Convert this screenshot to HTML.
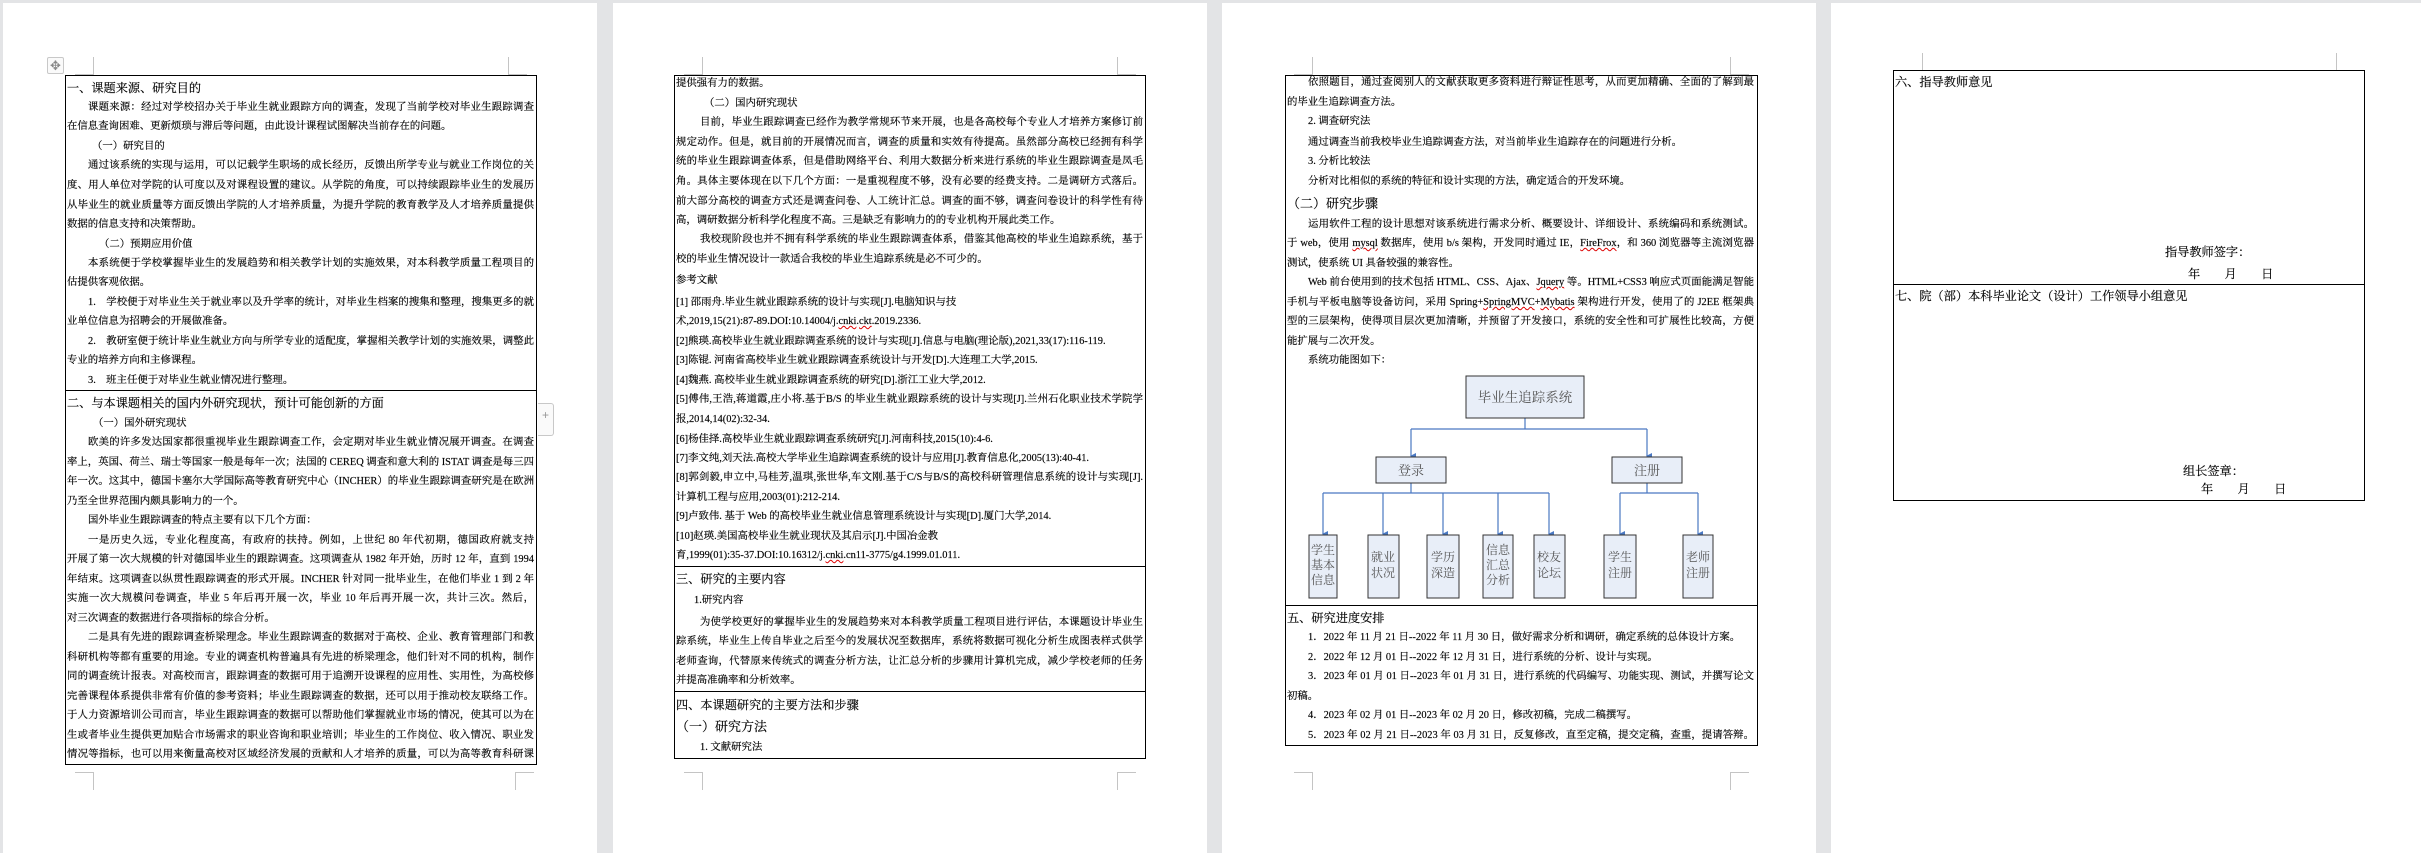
<!DOCTYPE html>
<html><head><meta charset="utf-8">
<style>
*{box-sizing:border-box;margin:0;padding:0}
body{width:2421px;height:843px;background:#e3e4e6;position:relative;overflow:hidden;font-family:"Liberation Serif","Noto Serif CJK SC",serif;color:#000}
.pg{position:absolute;top:3px;height:850px;background:#fff}
.tb{position:absolute;border:1.5px solid #000}
.hr{position:absolute;height:0;border-top:1.5px solid #000}
.c{position:absolute;top:0;width:471px;height:843px;-webkit-text-stroke:0.15px #000}
.l{position:absolute;left:2px;width:467px;height:20px;line-height:20px;font-size:10.4px;overflow:hidden;white-space:normal}
.j{text-align:justify;text-align-last:justify}
.i{padding-left:21px}
.h{font-size:12.2px}
.h2{font-size:13px}
.w{text-decoration:underline wavy #d00;text-decoration-thickness:1px}
.cm{position:absolute;border-color:#c4c4c4;border-style:solid;width:19px;height:18px}
.tl{border-width:0 1px 1px 0}
.tr{border-width:0 0 1px 1px}
.bl{border-width:1px 1px 0 0}
.br{border-width:1px 0 0 1px}
</style></head><body>

<div class="pg" style="left:3px;width:594px"></div>
<div class="pg" style="left:613px;width:594px"></div>
<div class="pg" style="left:1222px;width:594px"></div>
<div class="pg" style="left:1831px;width:600px"></div>

<div class="cm tl" style="left:75px;top:57px"></div><div class="cm tr" style="left:508px;top:57px"></div>
<div class="cm bl" style="left:75px;top:772px"></div><div class="cm br" style="left:515px;top:772px"></div>
<div class="cm tl" style="left:684px;top:57px"></div><div class="cm tr" style="left:1117px;top:57px"></div>
<div class="cm bl" style="left:684px;top:772px"></div><div class="cm br" style="left:1117px;top:772px"></div>
<div class="cm tl" style="left:1294px;top:57px"></div><div class="cm tr" style="left:1730px;top:57px"></div>
<div class="cm bl" style="left:1294px;top:772px"></div><div class="cm br" style="left:1730px;top:772px"></div>
<div class="cm tl" style="left:1904px;top:53px"></div><div class="cm tr" style="left:2336px;top:53px"></div>

<div style="position:absolute;left:47px;top:57px;width:17px;height:17px;border:1px solid #c8c8c8;border-radius:2px;background:#fafafa;color:#888;font-size:13px;line-height:15px;text-align:center">✥</div>
<div style="position:absolute;left:538px;top:403px;width:16px;height:33px;border:1px solid #c8c8c8;border-left:none;border-radius:0 3px 3px 0;background:#fafafa;color:#999;font-size:12px;line-height:22px;text-align:center;font-family:'Liberation Sans',sans-serif">+</div>

<!-- PAGE 1 -->
<div class="tb" style="left:65px;top:75px;width:472px;height:690px"></div>
<div class="hr" style="left:65px;top:390px;width:472px"></div>
<div class="c" style="left:65px">
<div class="l h" style="top:77px;height:22px;line-height:22px">一、课题来源、研究目的</div>
<div class="l i j" style="top:98px">课题来源：经过对学校招办关于毕业生就业跟踪方向的调查，发现了当前学校对毕业生跟踪调查存</div>
<div class="l" style="top:117px">在信息查询困难、更新烦琐与滞后等问题，由此设计课程试图解决当前存在的问题。</div>
<div class="l" style="top:137px;padding-left:25px">（一）研究目的</div>
<div class="l i j" style="top:156px">通过该系统的实现与运用，可以记载学生职场的成长经历，反馈出所学专业与就业工作岗位的关联</div>
<div class="l j" style="top:176px">度、用人单位对学院的认可度以及对课程设置的建议。从学院的角度，可以持续跟踪毕业生的发展历程，</div>
<div class="l j" style="top:196px">从毕业生的就业质量等方面反馈出学院的人才培养质量，为提升学院的教育教学及人才培养质量提供大</div>
<div class="l" style="top:215px">数据的信息支持和决策帮助。</div>
<div class="l" style="top:235px;padding-left:32px">（二）预期应用价值</div>
<div class="l i j" style="top:254px">本系统便于学校掌握毕业生的发展趋势和相关教学计划的实施效果，对本科教学质量工程项目的评</div>
<div class="l" style="top:273px">估提供客观依据。</div>
<div class="l i j" style="top:293px">1.　学校便于对毕业生关于就业率以及升学率的统计，对毕业生档案的搜集和整理，搜集更多的就</div>
<div class="l" style="top:312px">业单位信息为招聘会的开展做准备。</div>
<div class="l i j" style="top:332px">2.　教研室便于统计毕业生就业方向与所学专业的适配度，掌握相关教学计划的实施效果，调整此</div>
<div class="l" style="top:351px">专业的培养方向和主修课程。</div>
<div class="l i" style="top:371px">3.　班主任便于对毕业生就业情况进行整理。</div>
<div class="l h" style="top:392px;height:22px;line-height:22px">二、与本课题相关的国内外研究现状，预计可能创新的方面</div>
<div class="l" style="top:414px;padding-left:26px">（一）国外研究现状</div>
<div class="l i j" style="top:433px">欧美的许多发达国家都很重视毕业生跟踪调查工作，会定期对毕业生就业情况展开调查。在调查频</div>
<div class="l j" style="top:453px">率上，英国、荷兰、瑞士等国家一般是每年一次；法国的 CEREQ 调查和意大利的 ISTAT 调查是每三四</div>
<div class="l j" style="top:472px">年一次。这其中，德国卡塞尔大学国际高等教育研究中心（INCHER）的毕业生跟踪调查研究是在欧洲</div>
<div class="l" style="top:492px">乃至全世界范围内颇具影响力的一个。</div>
<div class="l i" style="top:511px">国外毕业生跟踪调查的特点主要有以下几个方面：</div>
<div class="l i j" style="top:531px">一是历史久远，专业化程度高，有政府的扶持。例如，上世纪 80 年代初期，德国政府就支持 INCHER</div>
<div class="l j" style="top:550px">开展了第一次大规模的针对德国毕业生的跟踪调查。这项调查从 1982 年开始，历时 12 年，直到 1994</div>
<div class="l j" style="top:570px">年结束。这项调查以纵贯性跟踪调查的形式开展。INCHER 针对同一批毕业生，在他们毕业 1 到 2 年后</div>
<div class="l j" style="top:589px">实施一次大规模问卷调查，毕业 5 年后再开展一次，毕业 10 年后再开展一次，共计三次。然后，INCHER</div>
<div class="l" style="top:609px">对三次调查的数据进行各项指标的综合分析。</div>
<div class="l i j" style="top:628px">二是具有先进的跟踪调查桥梁理念。毕业生跟踪调查的数据对于高校、企业、教育管理部门和教育</div>
<div class="l j" style="top:648px">科研机构等都有重要的用途。专业的调查机构普遍具有先进的桥梁理念，他们针对不同的机构，制作不</div>
<div class="l j" style="top:667px">同的调查统计报表。对高校而言，跟踪调查的数据可用于追溯开设课程的应用性、实用性，为高校修订</div>
<div class="l j" style="top:687px">完善课程体系提供非常有价值的参考资料；毕业生跟踪调查的数据，还可以用于推动校友联络工作。对</div>
<div class="l j" style="top:706px">于人力资源培训公司而言，毕业生跟踪调查的数据可以帮助他们掌握就业市场的情况，使其可以为在校</div>
<div class="l j" style="top:726px">生或者毕业生提供更加贴合市场需求的职业咨询和职业培训；毕业生的工作岗位、收入情况、职业发展</div>
<div class="l j" style="top:745px">情况等指标，也可以用来衡量高校对区域经济发展的贡献和人才培养的质量，可以为高等教育科研课题</div>
</div>

<!-- PAGE 2 -->
<div class="tb" style="left:674px;top:75px;width:472px;height:684px"></div>
<div class="hr" style="left:674px;top:566px;width:472px"></div>
<div class="hr" style="left:674px;top:691px;width:472px"></div>
<div class="c" style="left:674px">
<div class="l" style="top:74px">提供强有力的数据。</div>
<div class="l" style="top:94px;padding-left:28px">（二）国内研究现状</div>
<div class="l j" style="top:113px;padding-left:24px">目前，毕业生跟踪调查已经作为教学常规环节来开展，也是各高校每个专业人才培养方案修订前的</div>
<div class="l j" style="top:133px">规定动作。但是，就目前的开展情况而言，调查的质量和实效有待提高。虽然部分高校已经拥有科学系</div>
<div class="l j" style="top:152px">统的毕业生跟踪调查体系，但是借助网络平台、利用大数据分析来进行系统的毕业生跟踪调查是凤毛麟</div>
<div class="l j" style="top:172px">角。具体主要体现在以下几个方面：一是重视程度不够，没有必要的经费支持。二是调研方式落后。目</div>
<div class="l j" style="top:192px">前大部分高校的调查方式还是调查问卷、人工统计汇总。调查的面不够，调查问卷设计的科学性有待提</div>
<div class="l" style="top:211px">高，调研数据分析科学化程度不高。三是缺乏有影响力的的专业机构开展此类工作。</div>
<div class="l j" style="top:230px;padding-left:24px">我校现阶段也并不拥有科学系统的毕业生跟踪调查体系，借鉴其他高校的毕业生追踪系统，基于我</div>
<div class="l" style="top:250px">校的毕业生情况设计一款适合我校的毕业生追踪系统是必不可少的。</div>
<div class="l" style="top:271px">参考文献</div>
<div class="l" style="top:293px">[1] 邵雨舟.毕业生就业跟踪系统的设计与实现[J].电脑知识与技</div>
<div class="l" style="top:312px">术,2019,15(21):87-89.DOI:10.14004/j.<span class="w">cnki</span>.<span class="w">ckt</span>.2019.2336.</div>
<div class="l" style="top:332px">[2]熊瑛.高校毕业生就业跟踪调查系统的设计与实现[J].信息与电脑(理论版),2021,33(17):116-119.</div>
<div class="l" style="top:351px">[3]陈锟. 河南省高校毕业生就业跟踪调查系统设计与开发[D].大连理工大学,2015.</div>
<div class="l" style="top:371px">[4]魏燕. 高校毕业生就业跟踪调查系统的研究[D].浙江工业大学,2012.</div>
<div class="l j" style="top:390px">[5]傅伟,王浩,蒋道霞,庄小将.基于B/S 的毕业生就业跟踪系统的设计与实现[J].兰州石化职业技术学院学</div>
<div class="l" style="top:410px">报,2014,14(02):32-34.</div>
<div class="l" style="top:430px">[6]杨佳择.高校毕业生就业跟踪调查系统研究[J].河南科技,2015(10):4-6.</div>
<div class="l" style="top:449px">[7]李文纯,刘天法.高校大学毕业生追踪调查系统的设计与应用[J].教育信息化,2005(13):40-41.</div>
<div class="l j" style="top:468px">[8]郭剑毅,申立中,马桂芳,温琪,张世华,车文刚.基于C/S与B/S的高校科研管理信息系统的设计与实现[J].</div>
<div class="l" style="top:488px">计算机工程与应用,2003(01):212-214.</div>
<div class="l" style="top:507px">[9]卢致伟. 基于 Web 的高校毕业生就业信息管理系统设计与实现[D].厦门大学,2014.</div>
<div class="l" style="top:527px">[10]赵瑛.美国高校毕业生就业现状及其启示[J].中国冶金教</div>
<div class="l" style="top:546px">育,1999(01):35-37.DOI:10.16312/j.<span class="w">cnki</span>.cn11-3775/g4.1999.01.011.</div>
<div class="l h" style="top:568px;height:22px;line-height:22px">三、研究的主要内容</div>
<div class="l" style="top:591px;padding-left:18px">1.研究内容</div>
<div class="l j" style="top:613px;padding-left:24px">为使学校更好的掌握毕业生的发展趋势来对本科教学质量工程项目进行评估，本课题设计毕业生追</div>
<div class="l j" style="top:632px">踪系统，毕业生上传自毕业之后至今的发展状况至数据库，系统将数据可视化分析生成图表样式供学校</div>
<div class="l j" style="top:652px">老师查询，代替原来传统式的调查分析方法，让汇总分析的步骤用计算机完成，减少学校老师的任务量</div>
<div class="l" style="top:671px">并提高准确率和分析效率。</div>
<div class="l h" style="top:694px;height:22px;line-height:22px">四、本课题研究的主要方法和步骤</div>
<div class="l h2" style="top:716px;height:22px;line-height:22px">（一）研究方法</div>
<div class="l" style="top:738px;padding-left:24px">1. 文献研究法</div>
</div>

<!-- PAGE 3 -->
<div class="tb" style="left:1285px;top:75px;width:473px;height:671px"></div>
<div class="hr" style="left:1285px;top:605px;width:473px"></div>
<div class="c" style="left:1285px;width:473px">
<div class="l i j" style="top:73px">依照题目，通过查阅别人的文献获取更多资料进行辩证性思考，从而更加精确、全面的了解到最新</div>
<div class="l" style="top:93px">的毕业生追踪调查方法。</div>
<div class="l i" style="top:112px">2. 调查研究法</div>
<div class="l i" style="top:133px">通过调查当前我校毕业生追踪调查方法，对当前毕业生追踪存在的问题进行分析。</div>
<div class="l i" style="top:152px">3. 分析比较法</div>
<div class="l i" style="top:172px">分析对比相似的系统的特征和设计实现的方法，确定适合的开发环境。</div>
<div class="l h2" style="top:193px;height:22px;line-height:22px">（二）研究步骤</div>
<div class="l i j" style="top:215px">运用软件工程的设计思想对该系统进行需求分析、概要设计、详细设计、系统编码和系统测试。基</div>
<div class="l j" style="top:234px">于 web，使用 <span class="w">mysql</span> 数据库，使用 b/s 架构，开发同时通过 IE，<span class="w">FireFrox</span>，和 360 浏览器等主流浏览器</div>
<div class="l" style="top:254px">测试，使系统 UI 具备较强的兼容性。</div>
<div class="l i j" style="top:273px">Web 前台使用到的技术包括 HTML、CSS、Ajax、<span class="w">Jquery</span> 等。HTML+CSS3 响应式页面能满足智能</div>
<div class="l j" style="top:293px">手机与平板电脑等设备访问，采用 Spring+<span class="w">SpringMVC</span>+<span class="w">Mybatis</span> 架构进行开发，使用了的 J2EE 框架典</div>
<div class="l j" style="top:312px">型的三层架构，使得项目层次更加清晰，并预留了开发接口，系统的安全性和可扩展性比较高，方便功</div>
<div class="l" style="top:332px">能扩展与二次开发。</div>
<div class="l i" style="top:351px">系统功能图如下：</div>
<div class="l h" style="top:607px;height:22px;line-height:22px">五、研究进度安排</div>
<div class="l i" style="top:628px">1．2022 年 11 月 21 日--2022 年 11 月 30 日，做好需求分析和调研，确定系统的总体设计方案。</div>
<div class="l i" style="top:648px">2．2022 年 12 月 01 日--2022 年 12 月 31 日，进行系统的分析、设计与实现。</div>
<div class="l i j" style="top:667px">3．2023 年 01 月 01 日--2023 年 01 月 31 日，进行系统的代码编写、功能实现、测试，并撰写论文</div>
<div class="l" style="top:687px">初稿。</div>
<div class="l i" style="top:706px">4．2023 年 02 月 01 日--2023 年 02 月 20 日，修改初稿，完成二稿撰写。</div>
<div class="l i j" style="top:726px">5．2023 年 02 月 21 日--2023 年 03 月 31 日，反复修改，直至定稿，提交定稿，查重，提请答辩。</div>
</div>

<svg style="position:absolute;left:1285px;top:360px" width="473" height="245" viewBox="0 0 473 245" font-family="Liberation Serif, Noto Serif CJK SC, serif">
<defs><marker id="a" markerWidth="6" markerHeight="6" refX="3" refY="5" orient="auto-start-reverse" markerUnits="userSpaceOnUse"><path d="M0,0 L6,0 L3,6 z" fill="#4a78c2"/></marker></defs>
<g stroke="#4a78c2" stroke-width="1.2" fill="none">
<path d="M240 58V69M126 69H362"/>
<path d="M126 69V96" marker-end="url(#a)"/><path d="M362 69V96" marker-end="url(#a)"/>
<path d="M126 123V133M38 133H264M362 123V133M335 133H413"/>
<path d="M38 133V174" marker-end="url(#a)"/><path d="M98 133V174" marker-end="url(#a)"/><path d="M158 133V174" marker-end="url(#a)"/><path d="M213 133V174" marker-end="url(#a)"/><path d="M264 133V174" marker-end="url(#a)"/>
<path d="M335 133V174" marker-end="url(#a)"/><path d="M413 133V174" marker-end="url(#a)"/>
</g>
<g fill="#e8eef8" stroke="#333" stroke-width="1">
<rect x="181" y="16" width="118" height="42"/>
<rect x="91" y="97" width="70" height="26"/><rect x="327" y="97" width="70" height="26"/>
<rect x="24" y="175" width="28" height="63"/><rect x="83" y="175" width="31" height="63"/><rect x="142" y="175" width="32" height="63"/><rect x="198" y="175" width="30" height="63"/><rect x="249" y="175" width="31" height="63"/><rect x="319" y="175" width="32" height="63"/><rect x="398" y="175" width="30" height="63"/>
</g>
<g fill="#555" font-size="12" text-anchor="middle">
<text x="240" y="42" font-size="13.5">毕业生追踪系统</text>
<text x="126" y="115" font-size="13">登录</text><text x="362" y="115" font-size="13">注册</text>
<text x="38" y="194">学生</text><text x="38" y="209">基本</text><text x="38" y="224">信息</text>
<text x="98" y="201">就业</text><text x="98" y="217">状况</text>
<text x="158" y="201">学历</text><text x="158" y="217">深造</text>
<text x="213" y="194">信息</text><text x="213" y="209">汇总</text><text x="213" y="224">分析</text>
<text x="264" y="201">校友</text><text x="264" y="217">论坛</text>
<text x="335" y="201">学生</text><text x="335" y="217">注册</text>
<text x="413" y="201">老师</text><text x="413" y="217">注册</text>
</g>
</svg>

<!-- PAGE 4 -->
<div class="tb" style="left:1893px;top:70px;width:472px;height:431px"></div>
<div class="hr" style="left:1893px;top:284px;width:472px"></div>
<div class="c" style="left:1893px">
<div class="l h" style="top:71px;height:22px;line-height:22px">六、指导教师意见</div>
<div class="l h" style="top:241px;left:272px;width:160px;height:22px;line-height:22px">指导教师签字：</div>
<div class="l h" style="top:263px;left:295px;width:160px;height:22px;line-height:22px">年　　月　　日</div>
<div class="l h" style="top:285px;height:22px;line-height:22px">七、院（部）本科毕业论文（设计）工作领导小组意见</div>
<div class="l h" style="top:460px;left:290px;width:160px;height:22px;line-height:22px">组长签章：</div>
<div class="l h" style="top:478px;left:308px;width:160px;height:22px;line-height:22px">年　　月　　日</div>
</div>
</body></html>
